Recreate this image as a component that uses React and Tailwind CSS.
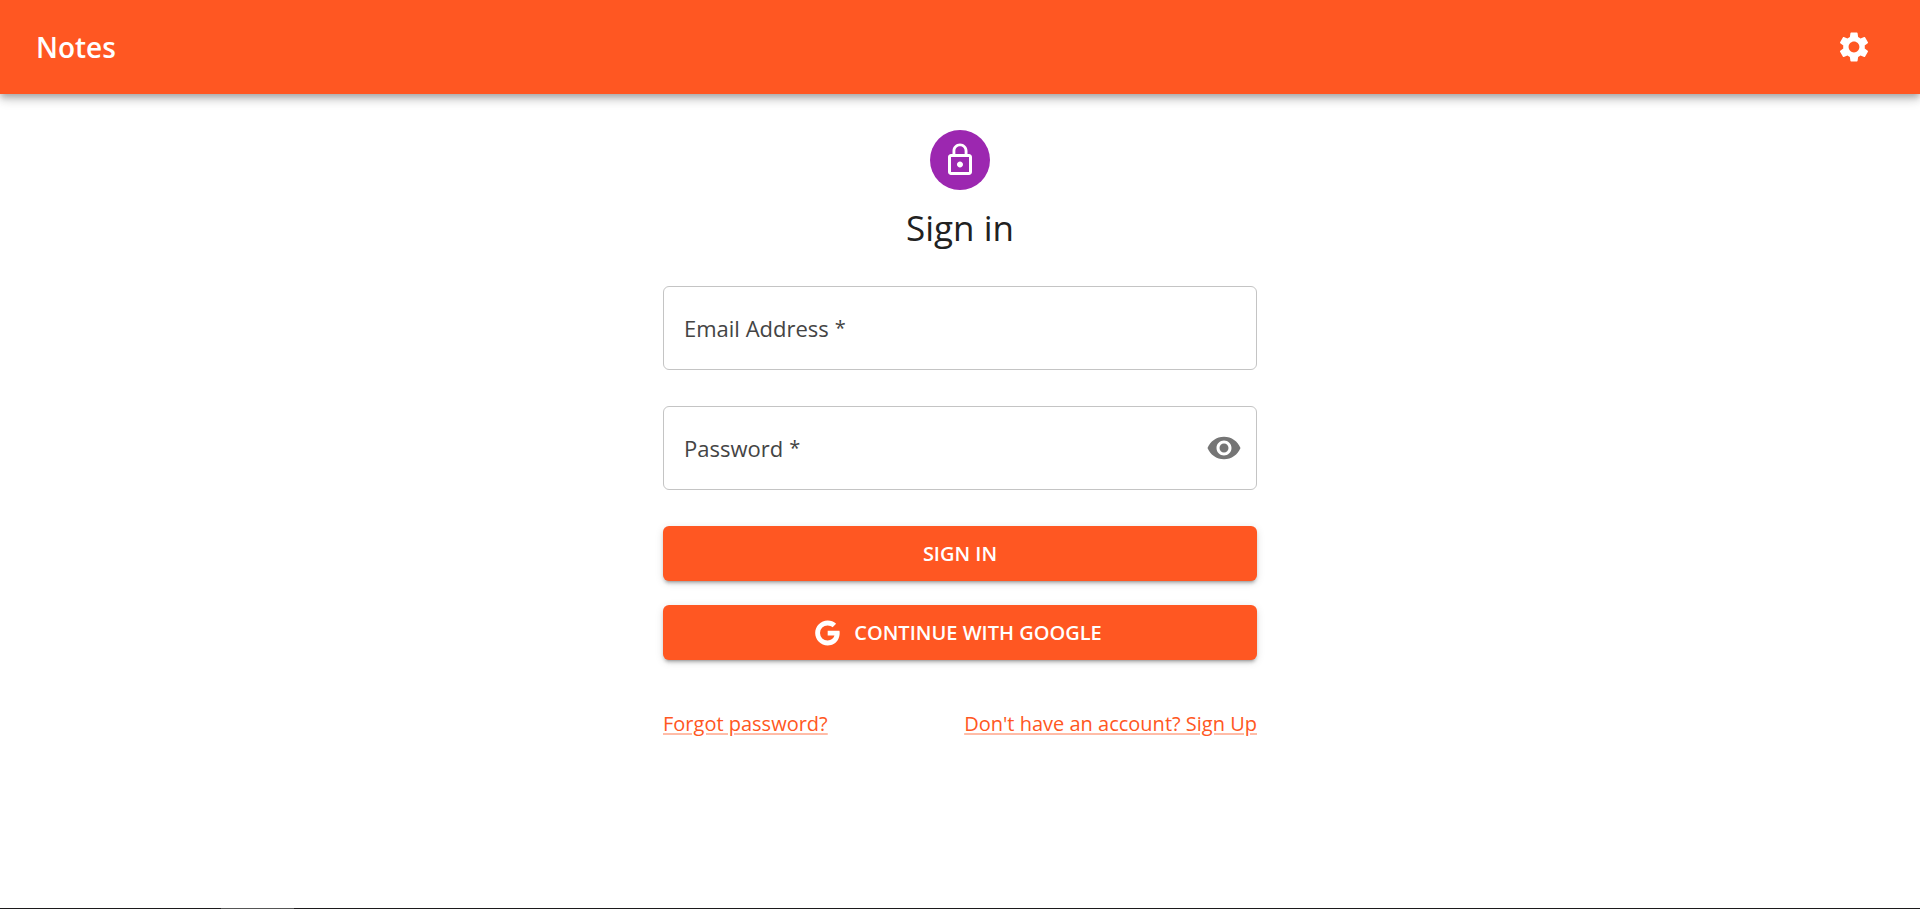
import { useState } from "react";
import { MdSettings, MdVisibility, MdVisibilityOff } from "react-icons/md";

function LockIcon() {
  return (
    <svg viewBox="0 0 24 24" className="size-9 fill-current" aria-hidden="true">
      <path d="M12 17c1.1 0 2-.9 2-2s-.9-2-2-2-2 .9-2 2 .9 2 2 2zm6-9h-1V6c0-2.76-2.24-5-5-5S7 3.24 7 6v2H6c-1.1 0-2 .9-2 2v10c0 1.1.9 2 2 2h12c1.1 0 2-.9 2-2V10c0-1.1-.9-2-2-2zM8.9 6c0-1.71 1.39-3.1 3.1-3.1s3.1 1.39 3.1 3.1v2H8.9V6zM18 20H6V10h12v10z" />
    </svg>
  );
}

function GoogleIcon() {
  return (
    <svg viewBox="0 0 24 24" className="-ml-1.5 size-[30px] fill-current" aria-hidden="true">
      <path d="M12.545 10.239v3.821h5.445c-.712 2.315-2.647 3.972-5.445 3.972a6.033 6.033 0 1 1 0-12.064c1.498 0 2.866.549 3.921 1.453l2.814-2.814A9.969 9.969 0 0 0 12.545 2C7.021 2 2.543 6.477 2.543 12s4.478 10 10.002 10c8.396 0 10.249-7.85 9.426-11.748l-9.426-.013z" />
    </svg>
  );
}

function Field({ id, label, type, children }) {
  const [value, setValue] = useState("");
  return (
    <div className="relative flex h-[84px] items-center rounded-md border border-[#c4c4c4] focus-within:border-[#ff5722]">
      <input
        id={id}
        type={type}
        required
        value={value}
        onChange={(e) => setValue(e.target.value)}
        className="h-full min-w-0 flex-1 rounded-md bg-transparent px-5 text-[22px] text-black/87 outline-none"
      />
      <label
        htmlFor={id}
        className={
          value
            ? "pointer-events-none absolute -top-3 left-4 bg-white px-1 text-base text-black/60"
            : "pointer-events-none absolute inset-y-0 left-5 flex items-center text-[22px] text-[#444]"
        }
      >
        {label}
        <span className="ml-1.5 text-xl">*</span>
      </label>
      {children}
    </div>
  );
}

const buttonClass =
  "flex h-[55px] w-full cursor-pointer items-center justify-center gap-3 rounded-md bg-[#ff5722] text-xl font-semibold text-white uppercase shadow-[0_4px_2px_-3px_rgba(0,0,0,0.2),0_3px_3px_0_rgba(0,0,0,0.14),0_2px_8px_0_rgba(0,0,0,0.12)] hover:bg-[#e64a19]";

const linkClass =
  "text-[#ff5722] underline decoration-[#ff5722]/40 decoration-2 underline-offset-2 hover:decoration-[#ff5722]";

export default function App() {
  const [visible, setVisible] = useState(false);
  return (
    <div className="flex min-h-screen flex-col bg-white font-['Segoe_UI','Open_Sans',sans-serif] text-[#212121]">
      <header className="flex h-[94px] shrink-0 items-center justify-between bg-[#ff5722] px-9 text-white shadow-[0_3px_6px_-1px_rgba(0,0,0,0.2),0_6px_8px_0_rgba(0,0,0,0.14),0_2px_15px_0_rgba(0,0,0,0.12)]">
        <h1 className="text-[28px] font-semibold">Notes</h1>
        <button type="button" aria-label="Settings" className="cursor-pointer p-3">
          <MdSettings className="size-9" />
        </button>
      </header>

      <main className="mx-auto flex w-full max-w-[594px] flex-1 flex-col items-center pt-9">
        <div className="flex size-[60px] items-center justify-center rounded-full bg-[#9c27b0] text-white">
          <LockIcon />
        </div>
        <h2 className="mt-3 text-[35px] leading-13">Sign in</h2>
        <form className="mt-8 flex w-full flex-col" onSubmit={(e) => e.preventDefault()}>
          <div className="flex flex-col gap-9">
            <Field id="email" label="Email Address" type="email" />
            <Field id="password" label="Password" type={visible ? "text" : "password"}>
              <button
                type="button"
                aria-label="Toggle password visibility"
                onClick={() => setVisible(!visible)}
                className="mr-3.5 cursor-pointer text-[#757575]"
              >
                {visible ? <MdVisibilityOff className="size-9" /> : <MdVisibility className="size-9" />}
              </button>
            </Field>
          </div>
          <div className="mt-9 flex flex-col gap-6">
            <button type="submit" className={buttonClass}>
              Sign In
            </button>
            <button type="button" className={buttonClass}>
              <GoogleIcon />
              Continue with Google
            </button>
          </div>
          <div className="mt-12 flex justify-between text-xl leading-8">
            <a href="#forgot" className={linkClass}>
              Forgot password?
            </a>
            <a href="#signup" className={linkClass}>
              Don't have an account? Sign Up
            </a>
          </div>
        </form>
      </main>

      <footer className="flex h-px bg-[#1c1a1c]">
        <div className="ml-[221px] w-[73px] bg-[#555]" />
      </footer>
    </div>
  );
}
